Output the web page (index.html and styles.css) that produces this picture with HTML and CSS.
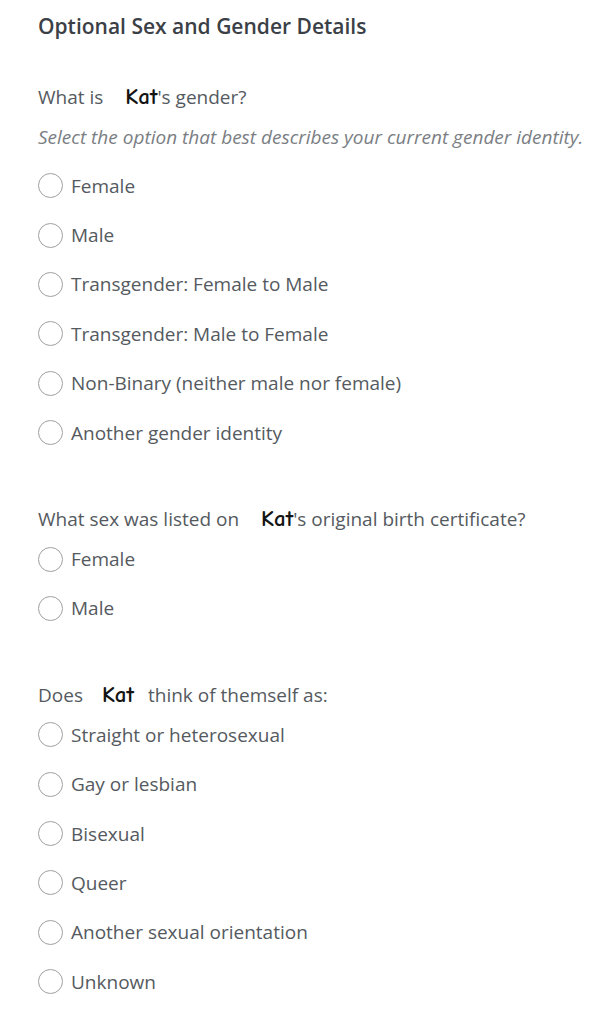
FILE: index.html
```html
<!DOCTYPE html>
<html lang="en">
<head>
    <meta charset="UTF-8">
    <meta name="viewport" content="width=device-width, initial-scale=1.0">
    <title>Optional Sex and Gender Details</title>
    <link rel="stylesheet" href="styles.css">
</head>
<body>
    <main class="form">
        <h2 class="form-title">Optional Sex and Gender Details</h2>

        <fieldset class="question" id="gender">
            <legend class="question-text">What is <span class="name">Kat</span>'s gender?</legend>
            <p class="hint">Select the option that best describes your current gender identity.</p>
            <label class="option"><input type="radio" name="gender"><span>Female</span></label>
            <label class="option"><input type="radio" name="gender"><span>Male</span></label>
            <label class="option"><input type="radio" name="gender"><span>Transgender: Female to Male</span></label>
            <label class="option"><input type="radio" name="gender"><span>Transgender: Male to Female</span></label>
            <label class="option"><input type="radio" name="gender"><span>Non-Binary (neither male nor female)</span></label>
            <label class="option"><input type="radio" name="gender"><span>Another gender identity</span></label>
        </fieldset>

        <fieldset class="question" id="birth-sex">
            <legend class="question-text">What sex was listed on <span class="name">Kat</span>'s original birth certificate?</legend>
            <label class="option"><input type="radio" name="birth-sex"><span>Female</span></label>
            <label class="option"><input type="radio" name="birth-sex"><span>Male</span></label>
        </fieldset>

        <fieldset class="question" id="orientation">
            <legend class="question-text">Does <span class="name name-pad">Kat</span> think of themself as:</legend>
            <label class="option"><input type="radio" name="orientation"><span>Straight or heterosexual</span></label>
            <label class="option"><input type="radio" name="orientation"><span>Gay or lesbian</span></label>
            <label class="option"><input type="radio" name="orientation"><span>Bisexual</span></label>
            <label class="option"><input type="radio" name="orientation"><span>Queer</span></label>
            <label class="option"><input type="radio" name="orientation"><span>Another sexual orientation</span></label>
            <label class="option"><input type="radio" name="orientation"><span>Unknown</span></label>
        </fieldset>
    </main>
</body>
</html>
```

FILE: styles.css
```css
:root {
    --title: #3b4046;
    --text: #555a60;
    --muted: #7a7e83;
    --radio: #a0a0a0;
    --bg: #ffffff;
}

* {
    box-sizing: border-box;
    margin: 0;
}

body {
    font-family: "Open Sans", "Liberation Sans", sans-serif;
    background: var(--bg);
    color: var(--text);
}

.form {
    padding: 12px 10px 0 38px;
}

.form-title {
    font-size: 21px;
    line-height: 28px;
    font-weight: 600;
    color: var(--title);
}

/* 问题块 */
.question {
    border: 0;
    padding: 0;
    margin-top: 48px;
}

#gender {
    margin-top: 43px;
}

.question-text {
    padding: 0;
    display: block;
    font-size: 19px;
    line-height: 28px;
    height: 28px;
    margin-bottom: 1px;
}

.name {
    font-family: "Comic Sans MS", "Comic Neue", "DejaVu Sans", sans-serif;
    font-weight: bold;
    font-size: 23px;
    line-height: 28px;
    color: #141414;
    margin-left: 17px;
}

.name-pad {
    margin: 0 9px 0 14px;
}

.hint {
    font-style: italic;
    font-size: 19px;
    line-height: 24px;
    white-space: nowrap;
    color: var(--muted);
    margin: 13px 0 12px;
}

/* 单选项 */
.option {
    display: flex;
    align-items: center;
    gap: 8px;
    height: 49.4px;
    font-size: 19px;
    cursor: pointer;
}

.option input {
    appearance: none;
    width: 25px;
    height: 25px;
    margin: 0;
    border: 1.5px solid var(--radio);
    border-radius: 50%;
    background: var(--bg);
    flex-shrink: 0;
}

.option input:checked {
    background: radial-gradient(circle, #4a90d9 0 6px, var(--bg) 7px);
}
```
